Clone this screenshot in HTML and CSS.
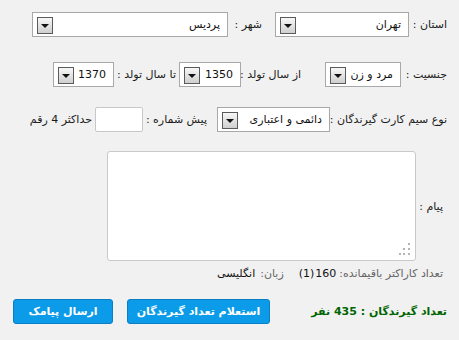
FILE: index.html
```html
<!DOCTYPE html>
<html lang="fa" dir="rtl">
<head>
<meta charset="utf-8">
<link rel="stylesheet" href="styles.css">
</head>
<body>
<div class="form">
  <div class="row row1">
    <div class="lbl w-ostan">استان :</div>
    <div class="sel w134"><span class="val">تهران</span><span class="arrow"></span></div>
    <div class="lbl w-shahr">شهر :</div>
    <div class="sel w196"><span class="val">پردیس</span><span class="arrow"></span></div>
  </div>
  <div class="row row2">
    <div class="lbl w-jens">جنسیت :</div>
    <div class="sel w76"><span class="val">مرد و زن</span><span class="arrow"></span></div>
    <div class="lbl w-az">از سال تولد :</div>
    <div class="sel w62"><span class="val">1350</span><span class="arrow"></span></div>
    <div class="lbl w-ta">تا سال تولد :</div>
    <div class="sel w61"><span class="val">1370</span><span class="arrow"></span></div>
  </div>
  <div class="row row3">
    <div class="lbl w-sim">نوع سیم کارت گیرندگان :</div>
    <div class="sel w113"><span class="val">دائمی و اعتباری</span><span class="arrow"></span></div>
    <div class="lbl w-pish">پیش شماره :</div>
    <input class="txt" type="text">
    <div class="lbl hint">حداکثر 4 رقم</div>
  </div>
  <div class="row row-msg">
    <div class="lbl w-msg">پیام :</div>
    <div class="ta-wrap">
      <textarea class="ta"></textarea>
      <svg class="grip" width="12" height="12" viewBox="0 0 12 12">
        <rect x="9" y="0" width="2" height="2" fill="#b5b5b5"/>
        <rect x="4" y="5" width="2" height="2" fill="#b5b5b5"/>
        <rect x="9" y="5" width="2" height="2" fill="#b5b5b5"/>
        <rect x="0" y="10" width="2" height="2" fill="#b5b5b5"/>
        <rect x="4" y="10" width="2" height="2" fill="#b5b5b5"/>
        <rect x="9" y="10" width="2" height="2" fill="#b5b5b5"/>
      </svg>
    </div>
  </div>
  <div class="row row-count">
    <span class="muted">تعداد کاراکتر باقیمانده:</span>
    <span class="num n160">160</span>
    <span class="num n1">(1)</span>
    <span class="muted lang-lbl">زبان:</span>
    <span class="dark lang-val">انگلیسی</span>
  </div>
  <div class="row row-actions">
    <div class="count">تعداد گیرندگان : 435 نفر</div>
    <button class="btn btn-check">استعلام تعداد گیرندگان</button>
    <button class="btn btn-send">ارسال پیامک</button>
  </div>
</div>
</body>
</html>
```
FILE: styles.css
```css
html, body {
  margin: 0;
  padding: 0;
  background: #f1f1f1;
}
body {
  direction: rtl;
  font-family: "DejaVu Sans", "Liberation Sans", sans-serif;
  font-size: 11px;
  color: #1a1a1a;
  width: 459px;
  height: 340px;
  overflow: hidden;
}
.form {
  padding: 12px 12px 0 0;
}
.row {
  display: flex;
  align-items: center;
}
.row1 { height: 25px; }
.row2 { height: 25px; margin-top: 25px; }
.row3 { height: 25px; margin-top: 20px; }
.row-msg { margin-top: 19px; }
.row-count { margin-top: 5px; height: 14px; padding-right: 4px; }
.row-actions { margin-top: 18px; height: 26px; }

.lbl {
  flex: none;
  white-space: nowrap;
  text-align: right;
  box-sizing: border-box;
}
.w-ostan { width: 38px; }
.w-shahr { width: 47px; padding-right: 13px; }
.w-jens { width: 46px; }
.w-az { width: 84px; padding-right: 24px; }
.w-ta { width: 65px; padding-right: 3px; }
.w-sim { width: 117px; }
.w-pish { width: 74px; padding-right: 10px; }
.hint { padding-right: 3px; }
.w-msg { width: 31px; padding-right: 4px; }

.sel {
  flex: none;
  position: relative;
  box-sizing: border-box;
  height: 25px;
  background: #fff;
  border: 1px solid #a8a8a8;
  display: flex;
  align-items: center;
  padding-right: 7px;
}
.w134 { width: 134px; }
.w196 { width: 196px; }
.w76 { width: 76px; }
.w62 { width: 62px; }
.w61 { width: 61px; }
.w113 { width: 113px; }
.val {
  white-space: nowrap;
  color: #111;
}
.arrow {
  position: absolute;
  left: 4px;
  top: 4px;
  width: 16px;
  height: 17px;
  box-sizing: border-box;
  border: 1px solid #5a5a5a;
  background: linear-gradient(#f7f7f7, #cfcfcf);
}
.arrow::after {
  content: "";
  position: absolute;
  left: 3px;
  top: 6px;
  border-left: 4px solid transparent;
  border-right: 4px solid transparent;
  border-top: 4px solid #111;
}

.txt {
  flex: none;
  box-sizing: border-box;
  width: 48px;
  height: 25px;
  margin: 0;
  padding: 0 4px;
  border: 1px solid #c8c8c8;
  border-radius: 2px;
  background: #fff;
  outline: none;
}

.ta-wrap {
  position: relative;
  width: 309px;
  height: 110px;
  flex: none;
}
.ta {
  display: block;
  box-sizing: border-box;
  width: 309px;
  height: 110px;
  margin: 0;
  border: 1px solid #c9c9c9;
  border-radius: 3px;
  background: #fff;
  resize: none;
  outline: none;
  font-family: inherit;
}
.grip {
  position: absolute;
  right: 5px;
  bottom: 6px;
}

.muted { color: #666; }
.num { color: #111; }
.n160 { margin-right: 3px; }
.n1 { margin-right: 1px; }
.lang-lbl { margin-right: 15px; }
.lang-val { margin-right: 5px; }
.dark { color: #111; }

.count {
  width: 177px;
  box-sizing: border-box;
  font-weight: bold;
  color: #006400;
  white-space: nowrap;
}
.btn {
  flex: none;
  box-sizing: border-box;
  height: 25px;
  border: 1px solid #0a7fc4;
  border-radius: 3px;
  background: #0b9be8;
  color: #fff;
  font-family: inherit;
  font-size: 11px;
  font-weight: bold;
  padding: 0;
  margin: 0;
}
.btn-check { width: 143px; }
.btn-send { width: 100px; margin-right: 14px; }
```
